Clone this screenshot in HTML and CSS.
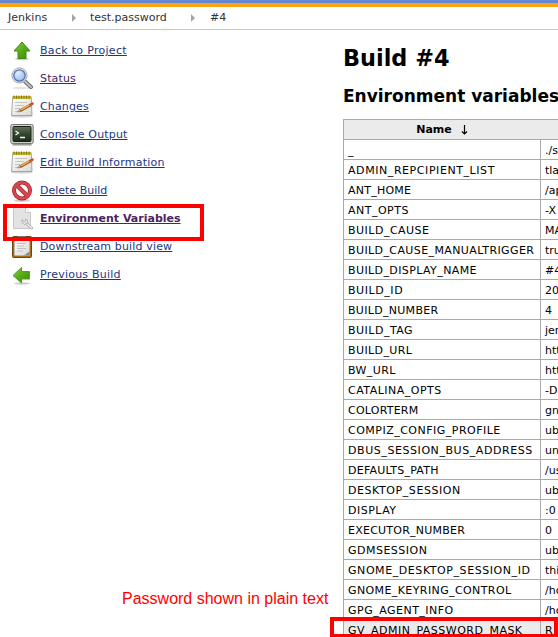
FILE: index.html
```html
<!DOCTYPE html>
<html lang="en">
<head>
<meta charset="utf-8">
<title>test.password #4 Environment variables [Jenkins]</title>
<link rel="stylesheet" href="styles.css">
</head>
<body>
<div class="topbar"></div>
<nav class="crumbs">
  <span class="crumb c1">Jenkins</span><i class="sep"></i><span class="crumb c2">test.password</span><i class="sep"></i><span class="crumb c3">#4</span>
</nav>
<svg width="0" height="0" class="defs">
  <defs>
    <linearGradient id="green" x1="0" y1="0" x2="1" y2="1"><stop offset="0" stop-color="#8bd838"/><stop offset=".5" stop-color="#55ab17"/><stop offset="1" stop-color="#3d8b0a"/></linearGradient>
    <linearGradient id="paper" x1="0" y1="0" x2="1" y2="1"><stop offset="0" stop-color="#fff"/><stop offset="1" stop-color="#d8d8d6"/></linearGradient>
    <linearGradient id="screen" x1="0" y1="0" x2="0" y2="1"><stop offset="0" stop-color="#61735a"/><stop offset=".5" stop-color="#35462f"/><stop offset="1" stop-color="#202e1d"/></linearGradient>
    <radialGradient id="lens" cx=".35" cy=".3" r=".8"><stop offset="0" stop-color="#e5effc"/><stop offset="1" stop-color="#8eb5ec"/></radialGradient>
    <symbol id="note" viewBox="0 0 24 24">
      <ellipse cx="12" cy="22.500" rx="11" ry="1.200" fill="#bbb" opacity=".6"/>
      <path d="M2.700 4h18.600l.7 17.500H1.500z" fill="url(#paper)" stroke="#92928e" stroke-width=".8"/>
      <path d="M2.500 2h19v3h-19z" fill="#c2b53a"/>
      <path d="M4 1.500v3M6.500 1.500v3M9 1.500v3M11.500 1.500v3M14 1.500v3M16.500 1.500v3M19 1.500v3" stroke="#81770f"/>
      <path d="M5 8.500h12M5 11.500h9M5 14.500h5M5 17.500h3" stroke="#c3c3c1"/>
      <path d="M10 16.800 20.500 11" stroke="#94591c" stroke-width="3"/>
      <path d="M10.500 16 20.500 10.500" stroke="#f0ae45" stroke-width="1.500"/>
      <path d="m7.500 18 2.400-2.700 1.200 2z" fill="#ead4b0" stroke="#755334" stroke-width=".6"/>
      <path d="m20.500 10.700 2-1.100" stroke="#cf4a34" stroke-width="2.600" stroke-linecap="round"/>
    </symbol>
  </defs>
</svg>
<div class="page">
  <aside class="tasks">
    <div class="task"><svg class="icon" viewBox="0 0 24 24"><ellipse cx="12" cy="21" rx="7" ry="1.300" fill="#ccc"/><path d="M12 4 20 13H16V20.500H8V13H4z" fill="url(#green)" stroke="#42861b"/></svg><a class="s3">Back to Project</a></div>
    <div class="task"><svg class="icon" viewBox="0 0 24 24"><ellipse cx="11" cy="22" rx="9" ry="1.200" fill="#e2e2e2"/><path d="m15 15.500 6 5.500" stroke="#666" stroke-width="4" stroke-linecap="round"/><path d="m15 15.500 6 5.500" stroke="#c3c3c3" stroke-width="2" stroke-linecap="round"/><circle cx="9.500" cy="9.500" r="7.600" fill="#eee" stroke="#a5a5a5" stroke-width="1"/><circle cx="9.500" cy="9.500" r="5.700" fill="url(#lens)" stroke="#5273b5" stroke-width="1.300"/></svg><a class="visited s1">Status</a></div>
    <div class="task"><svg class="icon"><use href="#note"/></svg><a class="s1">Changes</a></div>
    <div class="task"><svg class="icon" viewBox="0 0 24 24"><path d="M3 21.500h18l1 2H2z" fill="#999"/><rect x=".8" y="2.500" width="22.400" height="19" rx="1.500" fill="#d2d3cc" stroke="#777871"/><rect x="3" y="4.500" width="18" height="15" rx="1" fill="url(#screen)" stroke="#192315"/><path d="m5.500 9 3 2-3 2M10 15.500h5" fill="none" stroke="#f0f5ed" stroke-width="1.300"/></svg><a class="s1">Console Output</a></div>
    <div class="task"><svg class="icon"><use href="#note"/></svg><a class="s2">Edit Build Information</a></div>
    <div class="task"><svg class="icon" viewBox="0 0 24 24"><ellipse cx="12" cy="22.500" rx="8" ry="1.300" fill="#ccc"/><circle cx="12" cy="12.500" r="8" fill="#fff" stroke="#a82027" stroke-width="4"/><path d="m6.500 7 11 11" stroke="#a82027" stroke-width="4"/><circle cx="12" cy="12.500" r="8" fill="none" stroke="#d9484d" stroke-width="2.600"/><path d="m6.500 7 11 11" stroke="#d9484d" stroke-width="2.600"/></svg><a>Delete Build</a></div>
    <div class="task"><svg class="icon" viewBox="0 0 24 24"><path d="M3.500 1.500h12l5 5v16h-17z" fill="#e3e3e3" stroke="#c9c9c9"/><path d="M15.500 1.500v5h5" fill="#f7f7f7" stroke="#c9c9c9"/><path d="m15.500 16.500 6 5.500" stroke="#aaa" stroke-width="3" stroke-linecap="round"/><path d="m15.500 16.500 6 5.500" stroke="#eee" stroke-width="1.500" stroke-linecap="round"/><path d="M12 13.500v3l2.500 2 3-1.500v-3l-2-1v2l-1.500 1z" fill="#e5e5e5" stroke="#aaa" stroke-width=".8"/></svg><a class="visited current">Environment Variables</a></div>
    <div class="task"><svg class="icon" viewBox="0 0 24 24"><rect x="2.500" y="2.500" width="19" height="21" rx="1" fill="#a66d18" stroke="#70450c"/><path d="M4.500 4.500h15v17h-15z" fill="url(#paper)" stroke="#bbb" stroke-width=".5"/><path d="M8 2h8v3.500H8z" fill="#777"/><path d="M7 9.500h9M7 12h7M7 14.500h9M7 17h6" stroke="#c1c1c1"/><path d="m14 21.500 5.500-4v4z" fill="#858585"/></svg><a class="s1">Downstream build view</a></div>
    <div class="task"><svg class="icon" viewBox="0 0 24 24"><ellipse cx="12" cy="21.500" rx="8" ry="1.200" fill="#ccc"/><path d="M3 13.500 11.500 5.500V9.500H19.500V17H11.500V21z" fill="url(#green)" stroke="#579b31"/></svg><a class="s2">Previous Build</a></div>
    <div class="mark mark-task"></div>
  </aside>
  <main class="main">
    <h1>Build #4</h1>
    <h2>Environment variables</h2>
    <table class="vars">
      <thead><tr><th><span class="th">Name <svg class="arrow" viewBox="0 0 7 10"><path d="M3.500 0v9M1 6.500l2.500 2.500L6 6.500" fill="none" stroke="#000" stroke-width="1.200"/></svg></span></th><th></th></tr></thead>
      <tbody>
        <tr><td>_</td><td>./s</td></tr>
        <tr><td class="s6">ADMIN_REPCIPIENT_LIST</td><td>tlav</td></tr>
        <tr><td class="s2">ANT_HOME</td><td>/ap</td></tr>
        <tr><td class="s5">ANT_OPTS</td><td>-X</td></tr>
        <tr><td class="s5">BUILD_CAUSE</td><td>MA</td></tr>
        <tr><td class="s4">BUILD_CAUSE_MANUALTRIGGER</td><td>true</td></tr>
        <tr><td class="s4">BUILD_DISPLAY_NAME</td><td>#4</td></tr>
        <tr><td class="s6">BUILD_ID</td><td>20</td></tr>
        <tr><td class="s3">BUILD_NUMBER</td><td>4</td></tr>
        <tr><td class="s5">BUILD_TAG</td><td>jen</td></tr>
        <tr><td class="s4">BUILD_URL</td><td>http</td></tr>
        <tr><td class="s4">BW_URL</td><td>http</td></tr>
        <tr><td class="s5">CATALINA_OPTS</td><td>-D</td></tr>
        <tr><td class="s2">COLORTERM</td><td>gn</td></tr>
        <tr><td class="s5">COMPIZ_CONFIG_PROFILE</td><td>ub</td></tr>
        <tr><td class="s6">DBUS_SESSION_BUS_ADDRESS</td><td>un</td></tr>
        <tr><td class="s2">DEFAULTS_PATH</td><td>/us</td></tr>
        <tr><td class="s6">DESKTOP_SESSION</td><td>ub</td></tr>
        <tr><td class="s5">DISPLAY</td><td>:0</td></tr>
        <tr><td class="s2">EXECUTOR_NUMBER</td><td>0</td></tr>
        <tr><td class="s5">GDMSESSION</td><td>ub</td></tr>
        <tr><td class="s6">GNOME_DESKTOP_SESSION_ID</td><td>this</td></tr>
        <tr><td class="s4">GNOME_KEYRING_CONTROL</td><td>/ho</td></tr>
        <tr><td class="s5">GPG_AGENT_INFO</td><td>/ho</td></tr>
        <tr class="hl"><td class="s5">GV_ADMIN_PASSWORD_MASK</td><td>R</td></tr>
      </tbody>
    </table>
  </main>
</div>
<div class="caption">Password shown in plain text</div>
<div class="mark mark-row"></div>
</body>
</html>
```
FILE: styles.css
```css
* { box-sizing: border-box; }
html { overflow: hidden; }
body {
  margin: 0;
  width: 558px;
  height: 637px;
  overflow: hidden;
  position: relative;
  background: #fff;
  color: #000;
  font: 11px/14px Verdana, "DejaVu Sans", sans-serif;
}
.defs { position: absolute; }
.topbar { height: 7px; background: #6487d0; border-bottom: 4px solid #fca311; }
.crumbs { display: flex; align-items: center; height: 23px; padding-left: 8px; border-bottom: 1px solid #c9cbb9; color: #333; }
.sep { width: 4px; height: 8px; background: #a5a5a5; clip-path: polygon(0 0, 100% 50%, 0 100%); }
.crumb { white-space: nowrap; }
.c1 { width: 64px; }
.c2 { width: 101px; margin-left: 14px; }
.c3 { margin-left: 15px; }
.page { display: flex; }
.tasks { position: relative; flex: none; width: 343px; padding: 8px 0 0 10px; }
.task { display: flex; align-items: flex-start; gap: 6px; height: 28px; }
.icon { width: 24px; height: 24px; flex: none; }
.task a { padding-top: 6px; color: #1c3683; text-decoration: underline; text-underline-offset: 1px; white-space: nowrap; }
.task a.visited { color: #4a2360; }
.task a.current { font-weight: bold; }

/* letter tracking steps */
.s1 { letter-spacing: .15px; }
.s2 { letter-spacing: .23px; }
.s3 { letter-spacing: .3px; }
.s4 { letter-spacing: .4px; }
.s5 { letter-spacing: .49px; }
.s6 { letter-spacing: .57px; }

.main { flex: none; width: 300px; }
h1 { margin: 14px 0 0; font-size: 22.4px; line-height: 28px; }
h2 { margin: 14px 0 0; font-size: 17px; line-height: 20px; white-space: nowrap; }
.vars { margin-top: 13px; width: 300px; border-collapse: separate; border-spacing: 0; table-layout: fixed; border: solid #aaa; border-width: 1px 0 0 1px; }
.vars th { height: 20px; padding: 1px 0 0; background: #ebebeb; border-bottom: 1px solid #aaa; }
.vars th:first-child { width: 197px; }
.th { display: flex; justify-content: center; align-items: center; gap: 9px; padding-right: 1px; }
.arrow { width: 7px; height: 10px; }
.vars td { height: 20px; padding: 2px 4px 0; line-height: 14px; border: solid #aaa; border-width: 0 1px 1px 0; white-space: nowrap; }
.hl td { background: #ebebeb; }
.mark { position: absolute; border: 4px solid #f00; }
.mark-task { left: 3px; top: 174px; width: 201px; height: 37px; }
.mark-row { left: 330px; top: 617px; width: 228px; height: 20px; border-bottom-width: 3px; }
.caption { position: absolute; left: 122px; top: 589px; color: #f00; font: 16px/20px Helvetica, "Liberation Sans", sans-serif; white-space: nowrap; }
```
